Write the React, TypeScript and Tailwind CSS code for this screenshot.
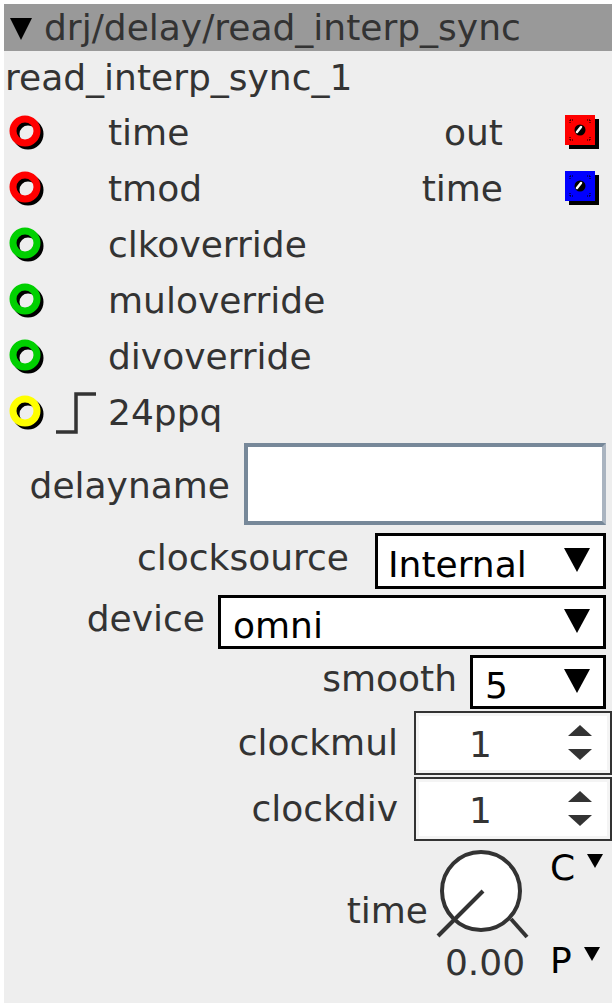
import React from 'react';

const font = { fontFamily: '"DejaVu Sans", sans-serif' };

const Inlet = ({ color }: { color: string }) => (
  <svg width="40" height="40" viewBox="0 0 40 40">
    <circle cx="19" cy="20" r="12" fill="none" stroke="#000" strokeWidth="7" />
    <circle cx="16" cy="17" r="12" fill="none" stroke={color} strokeWidth="7" />
  </svg>
);

const Outlet = ({ color }: { color: string }) => (
  <svg width="40" height="40" viewBox="0 0 40 40">
    <rect x="4" y="5" width="30" height="30" fill="#000" />
    <rect x="0" y="1" width="30" height="30" fill={color} />
    <path d="M5 6h3M5 6v3M25 6h-3M25 6v3M5 26h3M5 26v-3M25 26h-3M25 26v-3" stroke="#000" strokeWidth="1" strokeDasharray="1 1" />
    <circle cx="15" cy="16" r="5.5" fill="#000" />
    <path d="M12 18 L16 13" stroke="#fff" strokeWidth="2.5" strokeLinecap="round" />
  </svg>
);

const Trigger = () => (
  <svg width="44" height="44" viewBox="0 0 44 44">
    <path d="M2 40 H22 V2 H42" fill="none" stroke="#333" strokeWidth="3.5" />
  </svg>
);

const Caret = ({ w, h }: { w: number; h: number }) => (
  <svg width={w} height={h} viewBox={`0 0 ${w} ${h}`}>
    <path d={`M0 0 H${w} L${w / 2} ${h} Z`} fill="#000" />
  </svg>
);

const Spinner = () => (
  <svg width="26" height="40" viewBox="0 0 26 40">
    <path d="M1 13 L13 2 L25 13 Z" fill="#333" />
    <path d="M1 26 L13 37 L25 26 Z" fill="#333" />
  </svg>
);

const inputs = [
  { color: '#ff0000', label: 'time' },
  { color: '#ff0000', label: 'tmod' },
  { color: '#00d000', label: 'clkoverride' },
  { color: '#00d000', label: 'muloverride' },
  { color: '#00d000', label: 'divoverride' },
];

const outputs = [
  { color: '#ff0000', label: 'out' },
  { color: '#0000ff', label: 'time' },
];

export default function App() {
  return (
    <div className="w-[616px] h-[1008px] bg-white pt-[4px] pl-[4px]" style={font}>
      <div className="w-[608px] h-[999px] bg-[#eeeeee] text-[#333] text-[36px] leading-none flex flex-col">
        <div className="h-[47px] bg-[#999999] flex items-center pl-[6px]">
          <div className="mt-[2px]"><Caret w={22} h={22} /></div>
          <span className="ml-[12px]">drj/delay/read_interp_sync</span>
        </div>
        <div className="h-[54px] flex items-center pl-[1px]">read_interp_sync_1</div>

        {inputs.map((inp, i) => (
          <div key={i} className="h-[56px] flex items-center">
            <div className="w-[104px] pl-[5px] pt-[1px]"><Inlet color={inp.color} /></div>
            <span className="flex-1">{inp.label}</span>
            {outputs[i] && (
              <>
                <span>{outputs[i].label}</span>
                <div className="w-[47px] ml-[62px] pt-[2px]"><Outlet color={outputs[i].color} /></div>
              </>
            )}
          </div>
        ))}
        <div className="h-[56px] flex items-center">
          <div className="pl-[5px] pt-[1px] w-[50px]"><Inlet color="#ffff00" /></div>
          <div className="w-[54px] pt-[2px]"><Trigger /></div>
          <span>24ppq</span>
        </div>

        <div className="flex items-center justify-end mt-[2px] h-[82px]">
          <span className="mr-[14px] mt-[4px]">delayname</span>
          <div className="w-[362px] h-[82px] bg-white border-[4px] border-t-[#778899] border-l-[#778899] border-r-[#aab4c0] border-b-[#778899] mr-[6px]" />
        </div>

        <div className="flex items-center justify-end mt-[8px] h-[56px]">
          <span className="mr-[26px] -mt-[6px]">clocksource</span>
          <div className="w-[231px] h-[56px] bg-white border-[3px] border-black flex items-center justify-between pl-[10px] pr-[13px] mr-[6px] text-black">
            <span className="mt-[8px]">Internal</span>
            <div className="-mt-[2px]"><Caret w={26} h={24} /></div>
          </div>
        </div>

        <div className="flex items-center justify-end mt-[6px] h-[54px]">
          <span className="mr-[13px] -mt-[6px]">device</span>
          <div className="w-[388px] h-[54px] bg-white border-[3px] border-black flex items-center justify-between pl-[12px] pr-[13px] mr-[6px] text-black">
            <span className="mt-[8px]">omni</span>
            <div className="-mt-[2px]"><Caret w={26} h={24} /></div>
          </div>
        </div>

        <div className="flex items-center justify-end mt-[6px] h-[54px]">
          <span className="mr-[13px] -mt-[6px]">smooth</span>
          <div className="w-[136px] h-[54px] bg-white border-[3px] border-black flex items-center justify-between pl-[12px] pr-[13px] mr-[6px] text-black">
            <span className="mt-[8px]">5</span>
            <div className="-mt-[2px]"><Caret w={26} h={24} /></div>
          </div>
        </div>

        {['clockmul', 'clockdiv'].map((l) => (
          <div key={l} className="flex items-center justify-end h-[64px] mt-[2px]">
            <span className="mr-[16px]">{l}</span>
            <div className="w-[198px] h-[64px] bg-[#f4f4f4] border-[2px] border-[#333] p-[3px]">
              <div className="w-full h-full bg-white flex items-center pl-[50px] pr-[14px] justify-between">
                <span className="mt-[4px]">1</span>
                <Spinner />
              </div>
            </div>
          </div>
        ))}

        <div className="flex justify-end mt-[4px]">
          <span className="mt-[48px] mr-[2px]">time</span>
          <div className="flex flex-col items-center w-[100px]">
            <svg width="100" height="96" viewBox="0 0 100 96">
              <circle cx="51" cy="46" r="39" fill="#fff" stroke="#333" strokeWidth="4" />
              <path d="M8 91 L53 46" stroke="#333" strokeWidth="4" />
              <path d="M81 74 L97 92" stroke="#333" strokeWidth="4" />
            </svg>
            <span className="mt-[4px] ml-[10px]">0.00</span>
          </div>
          <div className="flex flex-col justify-between w-[62px] ml-[20px] text-black">
            <div className="flex items-start gap-[12px] mt-[5px]"><span>C</span><div className="mt-[4px]"><Caret w={16} h={14} /></div></div>
            <div className="flex items-start gap-[12px] mb-[2px]"><span>P</span><div className="mt-[4px]"><Caret w={16} h={14} /></div></div>
          </div>
        </div>
      </div>
    </div>
  );
}
